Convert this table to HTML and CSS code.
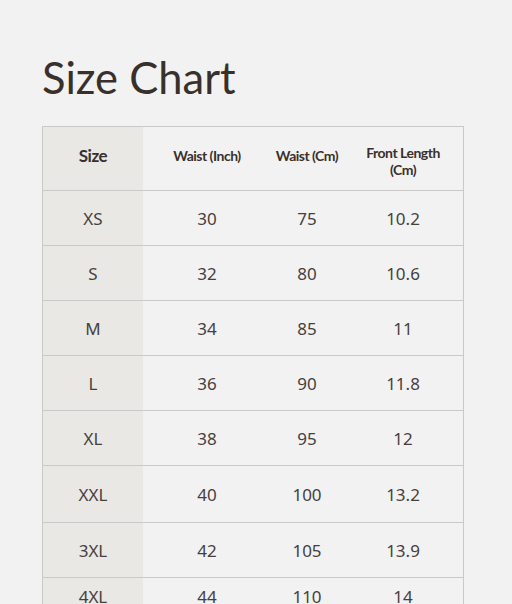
FILE: index.html
```html
<!DOCTYPE html>
<html>
<head>
<meta charset="utf-8">
<link rel="stylesheet" href="styles.css">
</head>
<body>
<main class="page">
  <h1 class="title">Size Chart</h1>
  <table class="chart">
    <thead>
      <tr>
        <th class="size-col">Size</th>
        <th class="c2">Waist (Inch)</th>
        <th class="c3">Waist (Cm)</th>
        <th class="c4">Front Length<br>(Cm)</th>
      </tr>
    </thead>
    <tbody>
      <tr><td class="size-col">XS</td><td>30</td><td>75</td><td>10.2</td></tr>
      <tr><td class="size-col">S</td><td>32</td><td>80</td><td>10.6</td></tr>
      <tr><td class="size-col">M</td><td>34</td><td>85</td><td>11</td></tr>
      <tr><td class="size-col">L</td><td>36</td><td>90</td><td>11.8</td></tr>
      <tr><td class="size-col">XL</td><td>38</td><td>95</td><td>12</td></tr>
      <tr class="tall"><td class="size-col">XXL</td><td>40</td><td>100</td><td>13.2</td></tr>
      <tr><td class="size-col">3XL</td><td>42</td><td>105</td><td>13.9</td></tr>
      <tr class="last"><td class="size-col">4XL</td><td>44</td><td>110</td><td>14</td></tr>
    </tbody>
  </table>
</main>
</body>
</html>
```
FILE: styles.css
```css
html, body {
  margin: 0;
  padding: 0;
  background: #f2f2f2;
}
.page {
  padding: 52px 0 0 42px;
}
.title {
  margin: 0 0 24px 0;
  font-family: "Lato", "Noto Sans", sans-serif;
  font-weight: 400;
  font-size: 43.5px;
  line-height: 50px;
  color: #3a302b;
  letter-spacing: 0;
}
.chart {
  border-collapse: collapse;
  table-layout: fixed;
  width: 422px;
  border: 1px solid #c9c9c9;
  color: #3c3633;
}
.chart th, .chart td {
  border-top: 1px solid #c9c9c9;
  border-bottom: 1px solid #c9c9c9;
  text-align: center;
  padding: 0;
}
.chart th {
  height: 57px;
  padding-bottom: 6px;
  font-family: "Lato", "Noto Sans", sans-serif;
  font-weight: 700;
  font-size: 14px;
  line-height: 17px;
  letter-spacing: -0.5px;
  color: #3a302b;
}
.chart th.c4 {
  height: 59px;
  padding-top: 4px;
  padding-bottom: 0;
}
.chart th.size-col {
  font-size: 17px;
  font-weight: 700;
}
.chart td {
  height: 54px;
  font-family: "Noto Sans", sans-serif;
  font-size: 17px;
  font-weight: 400;
  color: #46403d;
}
.chart tr.tall td {
  height: 56px;
}
.chart tr.last td {
  height: 36px;
  padding-bottom: 18px;
}
.size-col {
  width: 100px;
  background: #e9e8e4;
}
.c2 { width: 128px; }
.c3 { width: 72px; }
.c4 { width: 120px; }
```
